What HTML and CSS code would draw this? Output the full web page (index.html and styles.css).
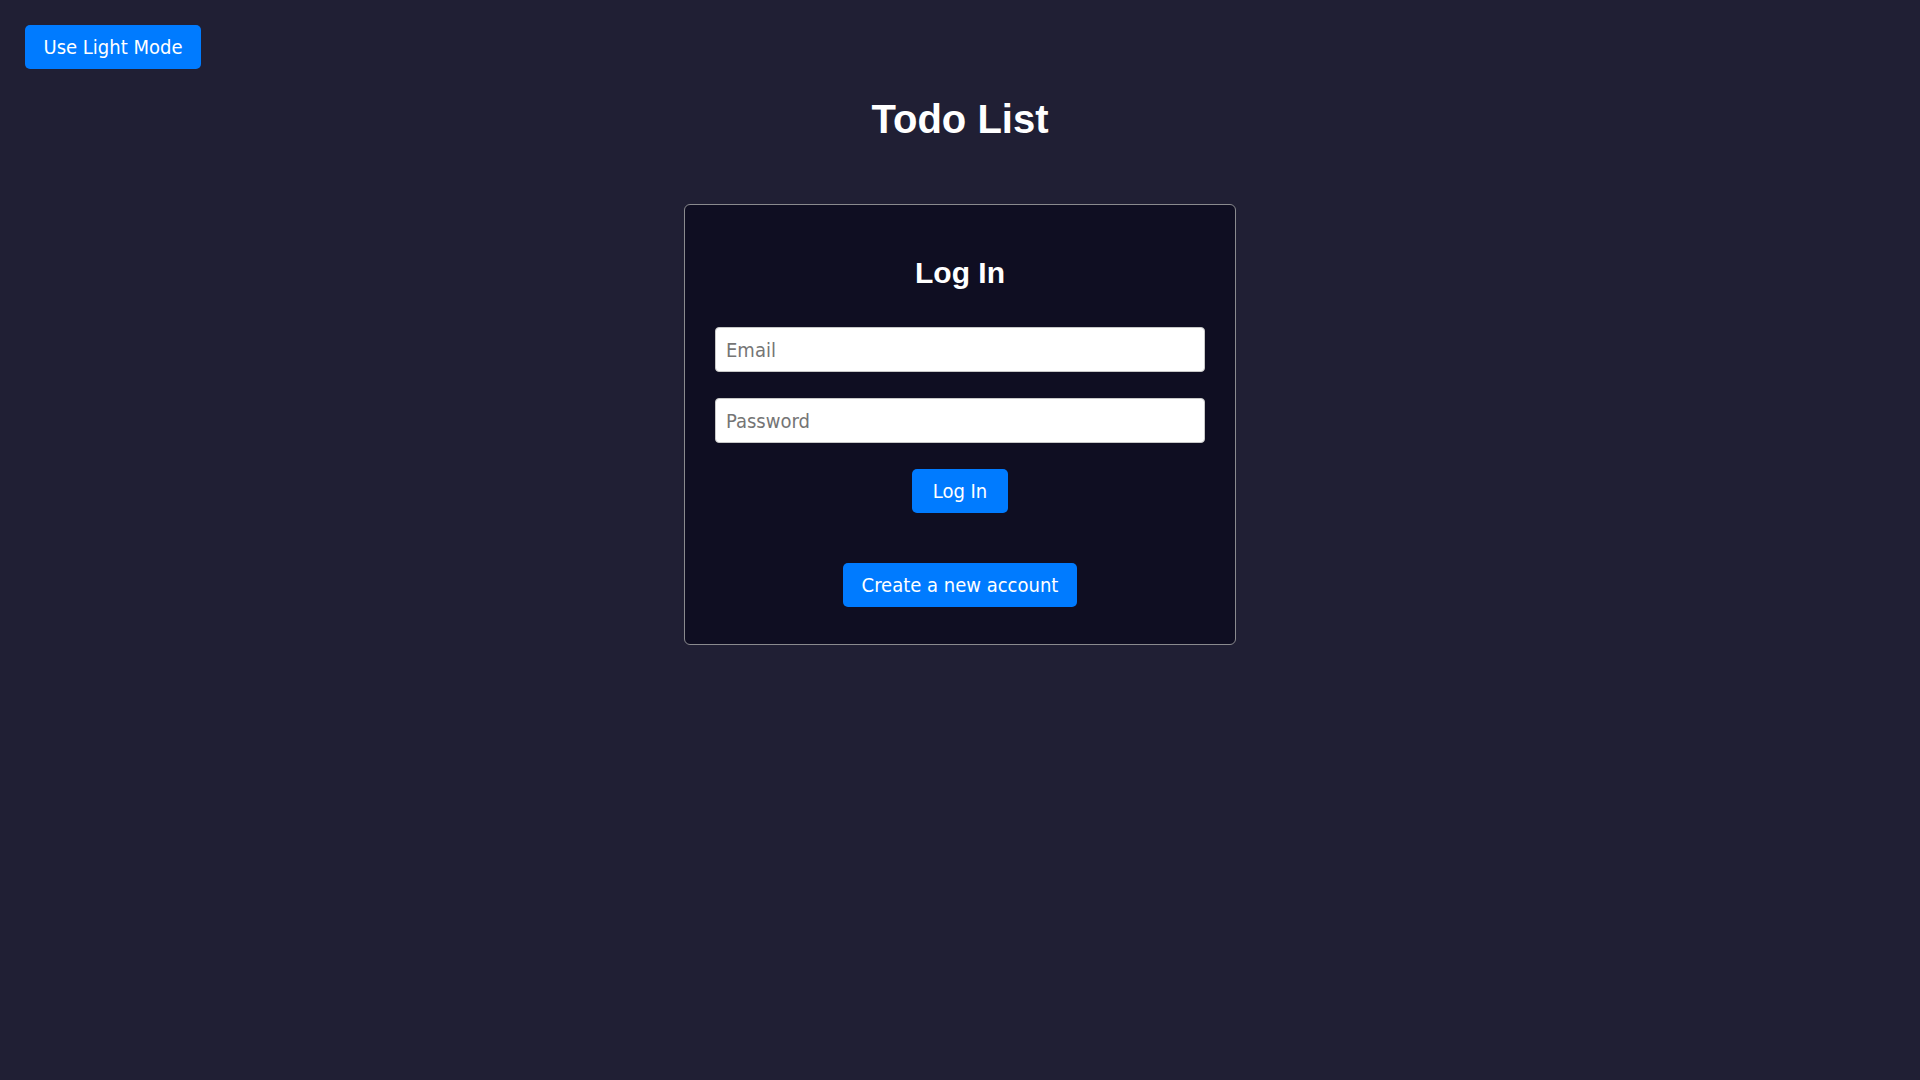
FILE: index.html
```html
<!DOCTYPE html>
<html lang="en">
<head>
<meta charset="utf-8">
<title>Todo List</title>
<link rel="stylesheet" href="styles.css">
</head>
<body>
  <div class="topbar">
    <button class="btn" type="button">Use Light Mode</button>
  </div>
  <h1 class="title">Todo List</h1>
  <div class="card">
    <h2 class="card-title">Log In</h2>
    <form class="form">
      <input class="field" type="email" placeholder="Email">
      <input class="field" type="password" placeholder="Password">
      <button class="btn btn-login" type="button">Log In</button>
    </form>
    <div class="switch">
      <button class="btn" type="button">Create a new account</button>
    </div>
  </div>
</body>
</html>
```
FILE: styles.css
```css
html, body {
  margin: 0;
  padding: 0;
}
body {
  background: #201f34;
  color: #ffffff;
  font-family: "DejaVu Sans Condensed", "DejaVu Sans", sans-serif;
  min-height: 1080px;
}
.topbar {
  padding: 25px 25px 0;
  display: flex;
}
.btn {
  font-family: "DejaVu Sans Condensed", "DejaVu Sans", sans-serif;
  font-size: 20px;
  line-height: 24px;
  padding: 10px 18.5px;
  border: none;
  border-radius: 5px;
  background: #007bff;
  color: #ffffff;
  cursor: pointer;
}
.btn-login {
  padding-left: 21px;
  padding-right: 21px;
}
.title {
  margin: 27px 0 0;
  text-align: center;
  font-family: "Liberation Sans", Arial, sans-serif;
  font-weight: bold;
  font-size: 40px;
  line-height: 46px;
}
.card {
  box-sizing: border-box;
  width: 552px;
  margin: 62px auto 0;
  padding: 51px 30px 37px;
  background: #0f0e22;
  border: 1px solid #8a8a8e;
  border-radius: 6px;
}
.card-title {
  margin: 0;
  text-align: center;
  font-family: "Liberation Sans", Arial, sans-serif;
  font-weight: bold;
  font-size: 30px;
  line-height: 34px;
}
.form {
  margin: 37px 0 0;
  display: flex;
  flex-direction: column;
  align-items: center;
  gap: 26px;
}
.field {
  box-sizing: border-box;
  width: 100%;
  height: 45px;
  padding: 0 10px;
  font-family: "DejaVu Sans Condensed", "DejaVu Sans", sans-serif;
  font-size: 20px;
  color: #222;
  background: #ffffff;
  border: 1px solid #c8c8c8;
  border-radius: 4px;
  outline: none;
}
.field::placeholder {
  color: #757575;
}
.switch {
  margin-top: 50px;
  display: flex;
  justify-content: center;
}
```
